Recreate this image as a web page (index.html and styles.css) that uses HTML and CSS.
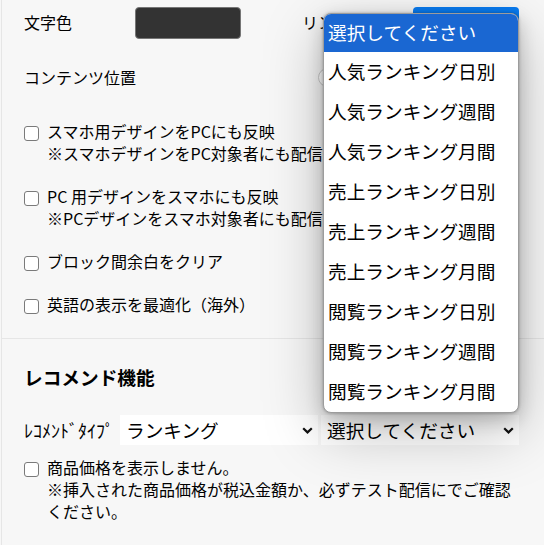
FILE: index.html
```html
<!DOCTYPE html>
<html lang="ja">
<head>
<meta charset="utf-8">
<title>デザイン設定</title>
<link rel="stylesheet" href="styles.css">
</head>
<body>
<div class="panel">
  <section class="settings">
    <div class="row-colors">
      <div class="field"><span class="label">文字色</span><span class="swatch swatch-dark"></span></div>
      <div class="field"><span class="label">リンク色</span><span class="swatch swatch-blue"></span></div>
    </div>
    <div class="row-position">
      <span class="label label-wide">コンテンツ位置</span>
      <span class="radio"></span>
    </div>
    <ul class="checks">
      <li class="check"><span class="box"></span><span class="check-text">スマホ用デザインをPCにも反映<br>※スマホデザインをPC対象者にも配信します。</span></li>
      <li class="check"><span class="box"></span><span class="check-text">PC 用デザインをスマホにも反映<br>※PCデザインをスマホ対象者にも配信します。</span></li>
      <li class="check"><span class="box"></span><span class="check-text">ブロック間余白をクリア</span></li>
      <li class="check"><span class="box"></span><span class="check-text">英語の表示を最適化（海外）</span></li>
    </ul>
  </section>
  <section class="recommend">
    <h2 class="recommend-title">レコメンド機能</h2>
    <div class="type-row">
      <span class="type-label">ﾚｺﾒﾝﾄﾞﾀｲﾌﾟ</span>
      <div class="select">
        <span>ランキング</span>
        <svg class="chevron" width="11" height="7" viewBox="0 0 11 7"><path d="M1.2 1.2 L5.5 5.4 L9.8 1.2" fill="none" stroke="#111" stroke-width="2.2"/></svg>
      </div>
      <div class="select select-open">
        <span>選択してください</span>
        <svg class="chevron" width="11" height="7" viewBox="0 0 11 7"><path d="M1.2 1.2 L5.5 5.4 L9.8 1.2" fill="none" stroke="#111" stroke-width="2.2"/></svg>
        <ul class="dropdown">
          <li class="option is-active">選択してください</li>
          <li class="option">人気ランキング日別</li>
          <li class="option">人気ランキング週間</li>
          <li class="option">人気ランキング月間</li>
          <li class="option">売上ランキング日別</li>
          <li class="option">売上ランキング週間</li>
          <li class="option">売上ランキング月間</li>
          <li class="option">閲覧ランキング日別</li>
          <li class="option">閲覧ランキング週間</li>
          <li class="option">閲覧ランキング月間</li>
        </ul>
      </div>
    </div>
    <div class="check check-bottom"><span class="box"></span><span class="check-text">商品価格を表示しません。<br>※挿入された商品価格が税込金額か、必ずテスト配信にでご確認ください。</span></div>
  </section>
</div>
</body>
</html>
```

FILE: styles.css
```css
* { box-sizing: border-box; }
html, body { margin: 0; padding: 0; }
body {
  width: 544px;
  height: 545px;
  overflow: hidden;
  background: #f7f7f7;
  color: #000;
  font-family: "Noto Sans CJK JP", "Noto Sans", sans-serif;
  font-size: 16px;
  line-height: 22px;
}
.panel {
  margin-left: 1px;
  border-left: 1px solid #e6e6e6;
  min-height: 545px;
}
.settings { padding: 7px 25px 23px 22px; }
.row-colors {
  display: grid;
  grid-template-columns: 278px 1fr;
  height: 32px;
}
.field { display: flex; align-items: center; }
.label { width: 111px; flex: none; white-space: nowrap; padding-bottom: 2px; }
.swatch { width: 106px; height: 32px; border-radius: 4px; flex: none; }
.swatch-dark { background: #333; border: 1px solid #767676; }
.swatch-blue { background: #0a7cf2; }
.row-position {
  display: flex;
  align-items: center;
  height: 32px;
  margin-top: 22px;
}
.label-wide { width: 294px; padding-bottom: 0; }
.radio {
  width: 19px;
  height: 19px;
  border-radius: 50%;
  border: 1px solid #c9c9c9;
  background: #fff;
  flex: none;
}
.checks {
  list-style: none;
  margin: 27px 0 0;
  padding: 0;
  display: flex;
  flex-direction: column;
  gap: 21px;
}
.check { display: flex; align-items: flex-start; gap: 8px; }
.box {
  width: 15px;
  height: 15px;
  margin-top: 6px;
  border: 1px solid #7a7a7a;
  border-radius: 3px;
  background: #fff;
  flex: none;
}
.recommend {
  border-top: 1px solid #e6e6e6;
  padding: 25px 25px 0 22px;
}
.recommend-title {
  margin: 0;
  font-size: 18.67px;
  line-height: 28px;
  font-weight: 700;
  padding-bottom: 3px;
  height: 28px;
  display: flex;
  align-items: center;
}
.type-row {
  display: flex;
  align-items: center;
  height: 30px;
  margin-top: 23px;
}
.type-label { width: 96px; flex: none; font-size: 18px; white-space: nowrap; }
.select {
  position: relative;
  width: 198px;
  height: 30px;
  flex: none;
  display: flex;
  align-items: center;
  justify-content: space-between;
  padding: 0 5px 0 6px;
  background: #fff;
  font-size: 18.67px;
  line-height: 30px;
}
.select + .select { margin-left: 3px; }
.chevron { display: block; flex: none; }
.dropdown {
  position: absolute;
  left: 2px;
  bottom: calc(100% + 2px);
  width: 196px;
  margin: 0;
  padding: 0;
  list-style: none;
  background: #fff;
  border: 1px solid #9c9c9c;
  border-radius: 8px;
  overflow: hidden;
  z-index: 10;
  box-shadow: 0 0 3px rgba(0,0,0,.28), 0 6px 18px rgba(0,0,0,.2), 0 18px 60px rgba(0,0,0,.26);
}
.option {
  height: 40px;
  display: flex;
  align-items: center;
  padding: 0 0 3px 4px;
  font-size: 18.67px;
  line-height: 24px;
  white-space: nowrap;
}
.option.is-active { height: 38px; background: #1a67d2; color: #fff; }
.check-bottom { margin-top: 11px; }
```
